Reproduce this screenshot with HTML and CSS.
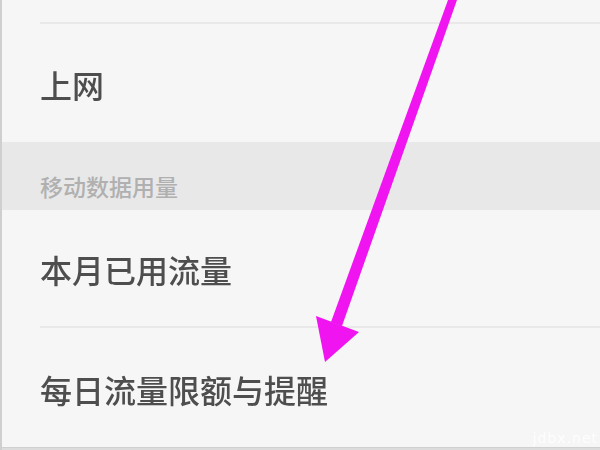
FILE: index.html
```html
<!DOCTYPE html>
<html lang="zh">
<head>
<meta charset="utf-8">
<link rel="stylesheet" href="styles.css">
</head>
<body>
<div class="screen">
  <div class="top-gap"></div>
  <div class="divider"></div>
  <div class="row row-first"><span class="label">上网</span></div>
  <div class="section">移动数据用量</div>
  <div class="row row-mid"><span class="label">本月已用流量</span></div>
  <div class="divider"></div>
  <div class="row row-last"><span class="label">每日流量限额与提醒</span></div>
  <div class="bottom-bar"></div>
  <div class="watermark">jdbx.net</div>
  <svg class="arrow" width="600" height="450" viewBox="0 0 600 450">
    <polygon points="448,0 457,0 342,326 331,322" fill="#f014f0"/>
    <polygon points="316,316 359,332 325,362" fill="#f014f0"/>
  </svg>
</div>
</body>
</html>
```
FILE: styles.css
```css
html, body {
  margin: 0;
  padding: 0;
  background: #f5f5f5;
}
.screen {
  position: relative;
  width: 600px;
  height: 450px;
  overflow: hidden;
  background: #f6f6f6;
  border-left: 2px solid #cfcfcf;
  box-sizing: border-box;
  font-family: "Noto Sans CJK SC", "Noto Sans", sans-serif;
  display: flex;
  flex-direction: column;
}
.top-gap {
  height: 22px;
  flex: none;
}
.divider {
  height: 2px;
  margin-left: 38px;
  background: #e9e9e9;
  flex: none;
}
.row {
  display: flex;
  align-items: center;
  padding-left: 38px;
  flex: none;
}
.row-first { height: 118px; }
.row-mid { height: 116px; }
.row-last { height: 119px; }
.label {
  font-size: 32px;
  font-weight: 500;
  color: #4e4e4e;
  line-height: 1;
  filter: blur(0.5px);
  position: relative;
  top: 1px;
}
.section {
  height: 68px;
  background: #e8e8e8;
  display: flex;
  align-items: center;
  padding-left: 38px;
  padding-top: 20px;
  box-sizing: border-box;
  font-size: 23px;
  font-weight: 500;
  color: #b0b0b0;
  line-height: 1;
  flex: none;
}
.bottom-bar {
  flex: 1;
  background: #dcdcdc;
  border-top: 1px solid #d0d0d0;
}
.watermark {
  position: absolute;
  right: 2px;
  bottom: 4px;
  font-family: "DejaVu Sans", sans-serif;
  font-size: 14px;
  color: #ffffff;
  opacity: 0.8;
  letter-spacing: 1px;
}
.arrow {
  position: absolute;
  left: -2px;
  top: 0;
  filter: blur(0.6px);
}
```
